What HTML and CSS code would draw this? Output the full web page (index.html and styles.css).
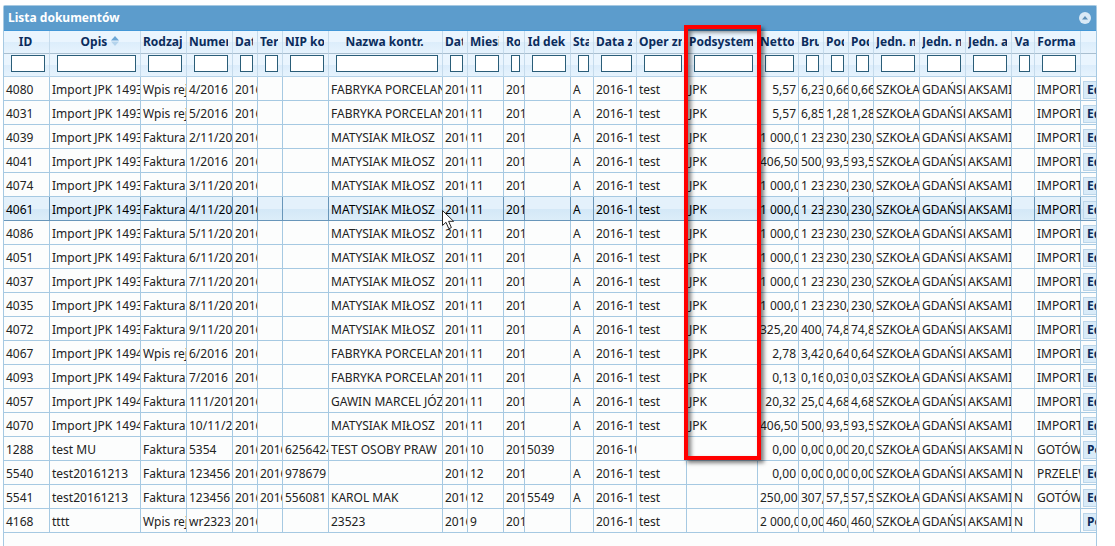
FILE: index.html
```html
<!DOCTYPE html>
<html lang="pl">
<head>
<meta charset="utf-8">
<title>Lista dokumentów</title>
<link rel="stylesheet" href="styles.css">
</head>
<body>
<main class="panel">
<header class="panel-title">
<h1>Lista dokumentów</h1>
<button class="toggle" type="button" aria-label="Zwiń"><svg viewBox="0 0 12 12" width="12" height="12"><circle cx="6" cy="6" r="6" fill="#d9e9f6"/><path d="M3 7.5h6L6 4z" fill="#5c8fb8"/></svg></button>
</header>
<table class="grid">
<colgroup><col class="w46"><col class="w91"><col class="w46"><col class="w46"><col class="w25"><col class="w25"><col class="w46"><col class="w114"><col class="w25"><col class="w36"><col class="w21"><col class="w46"><col class="w23"><col class="w43"><col class="w50"><col class="w71"><col class="w41"><col class="w25"><col class="w25"><col class="w25"><col class="w46"><col class="w46"><col class="w46"><col class="w23"><col class="w46"><col class="w15"></colgroup>
<thead>
<tr class="heads">
<th><div>ID</div></th>
<th><div class="sorted">Opis <svg class="sort" viewBox="0 0 8 10" width="8" height="10"><path d="M0 4.500h8L4 0z" fill="#6ba6d6"/><path d="M0 5.500h8L4 10z" fill="#b3d3ec"/></svg></div></th>
<th><div>Rodzaj</div></th>
<th><div>Numer</div></th>
<th><div>Dat</div></th>
<th><div>Ter</div></th>
<th><div>NIP ko</div></th>
<th><div>Nazwa kontr.</div></th>
<th><div>Dat</div></th>
<th><div>Miesi</div></th>
<th><div>Ro</div></th>
<th><div>Id dek</div></th>
<th><div>Sta</div></th>
<th><div>Data z</div></th>
<th><div>Oper zm</div></th>
<th class="marked"><div>Podsystem</div><span class="marker"></span></th>
<th><div>Netto</div></th>
<th><div>Bru</div></th>
<th><div>Pod</div></th>
<th><div>Pod</div></th>
<th><div>Jedn. n</div></th>
<th><div>Jedn. n</div></th>
<th><div>Jedn. a</div></th>
<th><div>Va</div></th>
<th><div>Forma</div></th>
<th></th>
</tr>
<tr class="filters">
<td><input aria-label="ID"><td><input aria-label="Opis"><td><input aria-label="Rodzaj"><td><input aria-label="Numer"><td><input aria-label="Data"><td><input aria-label="Termin"><td><input aria-label="NIP"><td><input aria-label="Nazwa"><td><input aria-label="Data księgowania"><td><input aria-label="Miesiąc"><td><input aria-label="Rok"><td><input aria-label="Id dekretu"><td><input aria-label="Status"><td><input aria-label="Data zmiany"><td><input aria-label="Operator"><td><input aria-label="Podsystem"><td><input aria-label="Netto"><td><input aria-label="Brutto"><td><input aria-label="Podatek"><td><input aria-label="Podatek odliczany"><td><input aria-label="Jednostka"><td><input aria-label="Jednostka nadrzędna"><td><input aria-label="Adres jednostki"><td><input aria-label="Vat"><td><input aria-label="Forma"><td></td>
</tr>
</thead>
<tbody>
<tr><td>4080<td>Import JPK 1493<td>Wpis rej<td>4/2016<td>2016<td><td><td>FABRYKA PORCELAN<td>2016<td>11<td>201<td><td>A<td>2016-1<td>test<td>JPK<td>5,57<td>6,23<td>0,66<td>0,66<td>SZKOŁA<td>GDAŃSK<td>AKSAMI<td><td>IMPORT<td><button>Edytuj</button></td></tr>
<tr><td>4031<td>Import JPK 1493<td>Wpis rej<td>5/2016<td>2016<td><td><td>FABRYKA PORCELAN<td>2016<td>11<td>201<td><td>A<td>2016-1<td>test<td>JPK<td>5,57<td>6,85<td>1,28<td>1,28<td>SZKOŁA<td>GDAŃSK<td>AKSAMI<td><td>IMPORT<td><button>Edytuj</button></td></tr>
<tr><td>4039<td>Import JPK 1493<td>Faktura<td>2/11/20<td>2016<td><td><td>MATYSIAK MIŁOSZ<td>2016<td>11<td>201<td><td>A<td>2016-1<td>test<td>JPK<td>1 000,0<td>1 23<td>230,<td>230,<td>SZKOŁA<td>GDAŃSK<td>AKSAMI<td><td>IMPORT<td><button>Edytuj</button></td></tr>
<tr><td>4041<td>Import JPK 1493<td>Faktura<td>1/2016<td>2016<td><td><td>MATYSIAK MIŁOSZ<td>2016<td>11<td>201<td><td>A<td>2016-1<td>test<td>JPK<td>406,50<td>500,<td>93,5<td>93,5<td>SZKOŁA<td>GDAŃSK<td>AKSAMI<td><td>IMPORT<td><button>Edytuj</button></td></tr>
<tr><td>4074<td>Import JPK 1493<td>Faktura<td>3/11/20<td>2016<td><td><td>MATYSIAK MIŁOSZ<td>2016<td>11<td>201<td><td>A<td>2016-1<td>test<td>JPK<td>1 000,0<td>1 23<td>230,<td>230,<td>SZKOŁA<td>GDAŃSK<td>AKSAMI<td><td>IMPORT<td><button>Edytuj</button></td></tr>
<tr class="hover"><td>4061<td>Import JPK 1493<td>Faktura<td>4/11/20<td>2016<td><td><td>MATYSIAK MIŁOSZ<td>2016<td>11<td>201<td><td>A<td>2016-1<td>test<td>JPK<td>1 000,0<td>1 23<td>230,<td>230,<td>SZKOŁA<td>GDAŃSK<td>AKSAMI<td><td>IMPORT<td><button>Edytuj</button></td></tr>
<tr><td>4086<td>Import JPK 1493<td>Faktura<td>5/11/20<td>2016<td><td><td>MATYSIAK MIŁOSZ<td>2016<td>11<td>201<td><td>A<td>2016-1<td>test<td>JPK<td>1 000,0<td>1 23<td>230,<td>230,<td>SZKOŁA<td>GDAŃSK<td>AKSAMI<td><td>IMPORT<td><button>Edytuj</button></td></tr>
<tr><td>4051<td>Import JPK 1493<td>Faktura<td>6/11/20<td>2016<td><td><td>MATYSIAK MIŁOSZ<td>2016<td>11<td>201<td><td>A<td>2016-1<td>test<td>JPK<td>1 000,0<td>1 23<td>230,<td>230,<td>SZKOŁA<td>GDAŃSK<td>AKSAMI<td><td>IMPORT<td><button>Edytuj</button></td></tr>
<tr><td>4037<td>Import JPK 1493<td>Faktura<td>7/11/20<td>2016<td><td><td>MATYSIAK MIŁOSZ<td>2016<td>11<td>201<td><td>A<td>2016-1<td>test<td>JPK<td>1 000,0<td>1 23<td>230,<td>230,<td>SZKOŁA<td>GDAŃSK<td>AKSAMI<td><td>IMPORT<td><button>Edytuj</button></td></tr>
<tr><td>4035<td>Import JPK 1493<td>Faktura<td>8/11/20<td>2016<td><td><td>MATYSIAK MIŁOSZ<td>2016<td>11<td>201<td><td>A<td>2016-1<td>test<td>JPK<td>1 000,0<td>1 23<td>230,<td>230,<td>SZKOŁA<td>GDAŃSK<td>AKSAMI<td><td>IMPORT<td><button>Edytuj</button></td></tr>
<tr><td>4072<td>Import JPK 1493<td>Faktura<td>9/11/20<td>2016<td><td><td>MATYSIAK MIŁOSZ<td>2016<td>11<td>201<td><td>A<td>2016-1<td>test<td>JPK<td>325,20<td>400,<td>74,8<td>74,8<td>SZKOŁA<td>GDAŃSK<td>AKSAMI<td><td>IMPORT<td><button>Edytuj</button></td></tr>
<tr><td>4067<td>Import JPK 1494<td>Wpis rej<td>6/2016<td>2016<td><td><td>FABRYKA PORCELAN<td>2016<td>11<td>201<td><td>A<td>2016-1<td>test<td>JPK<td>2,78<td>3,42<td>0,64<td>0,64<td>SZKOŁA<td>GDAŃSK<td>AKSAMI<td><td>IMPORT<td><button>Edytuj</button></td></tr>
<tr><td>4093<td>Import JPK 1494<td>Faktura<td>7/2016<td>2016<td><td><td>FABRYKA PORCELAN<td>2016<td>11<td>201<td><td>A<td>2016-1<td>test<td>JPK<td>0,13<td>0,16<td>0,03<td>0,03<td>SZKOŁA<td>GDAŃSK<td>AKSAMI<td><td>IMPORT<td><button>Edytuj</button></td></tr>
<tr><td>4057<td>Import JPK 1494<td>Faktura<td>111/201<td>2016<td><td><td>GAWIN MARCEL JÓZ<td>2016<td>11<td>201<td><td>A<td>2016-1<td>test<td>JPK<td>20,32<td>25,0<td>4,68<td>4,68<td>SZKOŁA<td>GDAŃSK<td>AKSAMI<td><td>IMPORT<td><button>Edytuj</button></td></tr>
<tr><td>4070<td>Import JPK 1494<td>Faktura<td>10/11/2<td>2016<td><td><td>MATYSIAK MIŁOSZ<td>2016<td>11<td>201<td><td>A<td>2016-1<td>test<td>JPK<td>406,50<td>500,<td>93,5<td>93,5<td>SZKOŁA<td>GDAŃSK<td>AKSAMI<td><td>IMPORT<td><button>Edytuj</button></td></tr>
<tr><td>1288<td>test MU<td>Faktura<td>5354<td>2016<td>2016<td>6256424<td>TEST OSOBY PRAW<td>2016<td>10<td>201<td>5039<td><td>2016-10<td><td><td>0,00<td>0,00<td>0,00<td>20,0<td>SZKOŁA<td>GDAŃSK<td>AKSAMI<td>N<td>GOTÓW<td><button>Podgląd</button></td></tr>
<tr><td>5540<td>test20161213<td>Faktura<td>123456<td>2016<td>2016<td>978679<td><td>2016<td>12<td>201<td><td>A<td>2016-1<td>test<td><td>0,00<td>0,00<td>0,00<td>0,00<td>SZKOŁA<td>GDAŃSK<td>AKSAMI<td>N<td>PRZELEW<td><button>Edytuj</button></td></tr>
<tr><td>5541<td>test20161213<td>Faktura<td>123456<td>2016<td>2016<td>556081<td>KAROL MAK<td>2016<td>12<td>201<td>5549<td>A<td>2016-1<td>test<td><td>250,00<td>307,<td>57,5<td>57,5<td>SZKOŁA<td>GDAŃSK<td>AKSAMI<td>N<td>GOTÓW<td><button>Edytuj</button></td></tr>
<tr><td>4168<td>tttt<td>Wpis rej<td>wr2323<td>2016<td><td><td>23523<td>2016<td>9<td>201<td><td><td>2016-1<td>test<td><td>2 000,0<td>0,00<td>460,<td>460,<td>SZKOŁA<td>GDAŃSK<td>AKSAMI<td>N<td><td><button>Podgląd</button></td></tr>
</tbody>
</table>
<svg class="pointer" viewBox="0 0 13 20" width="13" height="20"><path d="M.5 .5v15l3.500-3.200 2.800 6.400 2.600-1.100-2.800-6.300h5z" fill="#fff" stroke="#222" stroke-width="1"/></svg>
</main>
</body>
</html>
```
FILE: styles.css
```css
* { box-sizing: border-box; }
body {
  margin: 0;
  padding: 5px 18px 0 3px;
  background: #fff;
  color: #222;
  font: 12px/16px "Noto Sans", "Open Sans", sans-serif;
}
.panel {
  position: relative;
  min-height: calc(100vh - 5px);
  border: 1px solid #a6c9e2;
  border-bottom: 0;
  border-radius: 2px 2px 0 0;
  background: #fcfdfd;
}
.panel-title {
  display: flex;
  align-items: center;
  justify-content: space-between;
  height: 25px;
  padding: 0 5px 0 4px;
  border-bottom: 1px solid #4297d7;
  background: #5c9ccc;
  color: #fff;
}
h1 { margin: 0; font-size: 12px; line-height: 16px; }
.toggle { display: flex; padding: 0; border: 0; background: none; }
.grid {
  width: 100%;
  table-layout: fixed;
  border-collapse: separate;
  border-spacing: 0;
}
.w15 { width: 15px; }
.w21 { width: 21px; }
.w23 { width: 23px; }
.w25 { width: 25px; }
.w36 { width: 36px; }
.w41 { width: 41px; }
.w43 { width: 43px; }
.w46 { width: 46px; }
.w50 { width: 50px; }
.w71 { width: 71px; }
.w91 { width: 91px; }
.w114 { width: 114px; }
th, td { white-space: nowrap; text-align: left; vertical-align: middle; }
.heads th {
  height: 23px;
  padding: 0 4px 0 2px;
  border-right: 1px solid #c5dbec;
  border-bottom: 1px solid #a9bfd0;
  background: linear-gradient(#eaf5fe 0 50%, #dcedfb 50%, #e6f3fd);
  color: #0b2c5c;
  text-align: center;
}
.heads div { overflow: hidden; }
.heads .sorted { padding-left: 12px; }
.sort { margin-left: 1px; }
.filters td {
  height: 23px;
  padding: 0 4px 3px 7px;
  border-right: 1px solid #c5dbec;
  border-bottom: 1px solid #b5d2e8;
  background: linear-gradient(#eaf5fe 0 50%, #dcedfb 50%, #e6f3fd);
}
.filters input {
  display: block;
  width: 100%;
  height: 17px;
  padding: 0;
  border: 1px solid #2a5d78;
  background: #fff;
}
tbody td {
  height: 24px;
  padding: 2px 0 0 2px;
  overflow: hidden;
  border-right: 1px solid #a6c9e2;
  border-bottom: 1px solid #a6c9e2;
}
tbody td:nth-child(n+17):nth-child(-n+20) { padding-right: 2px; text-align: right; }
.hover td {
  border-right-color: #6896ba;
  border-bottom-color: #6896ba;
  background: linear-gradient(#e4f1fb 0 50%, #d3e8f7 50%, #dcedf9);
  color: #000;
}
.grid tr > :last-child { border-right: 0; }
tbody button {
  display: block;
  height: 18px;
  padding: 0 3px;
  border: 1px solid #bcd6ea;
  background: #d9ebf8;
  color: #0b2c5c;
  font: bold 12px/16px "Noto Sans", "Open Sans", sans-serif;
}
.heads .marked { position: relative; }
.marker {
  position: absolute;
  z-index: 2;
  top: -6px;
  right: -4px;
  left: -3px;
  height: 435px;
  border: 4px solid #f00;
  box-shadow: 3px 3px 4px rgba(0, 0, 0, .5), inset 3px 3px 4px rgba(0, 0, 0, .5);
  pointer-events: none;
}
.pointer { position: absolute; top: 204px; left: 438px; }
```
